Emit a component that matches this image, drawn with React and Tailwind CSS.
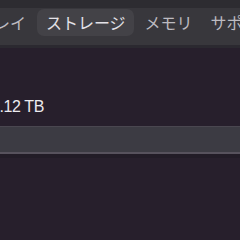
export default function App() {
  return (
    <div className="w-[240px] h-[240px] overflow-hidden bg-[#271f2c] flex flex-col">
      {/* window top strip */}
      <div className="h-[8px] shrink-0 bg-[#2d2c31]" />

      {/* tab toolbar */}
      <div
        className="h-[37px] shrink-0 bg-[#38373c] flex items-start pt-[1px] text-[16px] leading-[27px] whitespace-nowrap"
        style={{ fontFamily: '"Noto Sans CJK JP", sans-serif' }}
      >
        <div className="ml-[-78px] px-[9px] h-[27px] text-[#bdbbc1]">ディスプレイ</div>
        <div className="ml-[2px] pl-[9px] pr-[8px] h-[27px] rounded-[7px] bg-[#434247] text-[#e4e2e8]">
          ストレージ
        </div>
        <div className="ml-[2px] px-[9px] h-[27px] text-[#bdbbc1]">メモリ</div>
        <div className="w-px h-[20px] mt-[4px] bg-[#48474c]" />
        <div className="px-[9px] h-[27px] text-[#bdbbc1]">サポート</div>
      </div>
      <div className="h-[3px] shrink-0 bg-[#2b2930]" />

      {/* content */}
      <div className="flex-1 flex flex-col">
        <div
          className="mt-[51px] ml-[-9px] text-[16px] leading-[16px] tracking-[-0.4px] text-[#ecebef]"
          style={{ fontFamily: '"Liberation Sans", Arial, sans-serif' }}
        >
          1.12 TB
        </div>

        {/* usage bar */}
        <div className="mt-[11px] h-[28px] flex flex-col">
          <div className="h-px bg-[#4a4750]" />
          <div className="flex-1 bg-[#3c3b43]" />
          <div className="h-[2px] bg-[#57525d]" />
        </div>
        <div className="h-[4px] bg-[#221c27]" />
      </div>
    </div>
  );
}
